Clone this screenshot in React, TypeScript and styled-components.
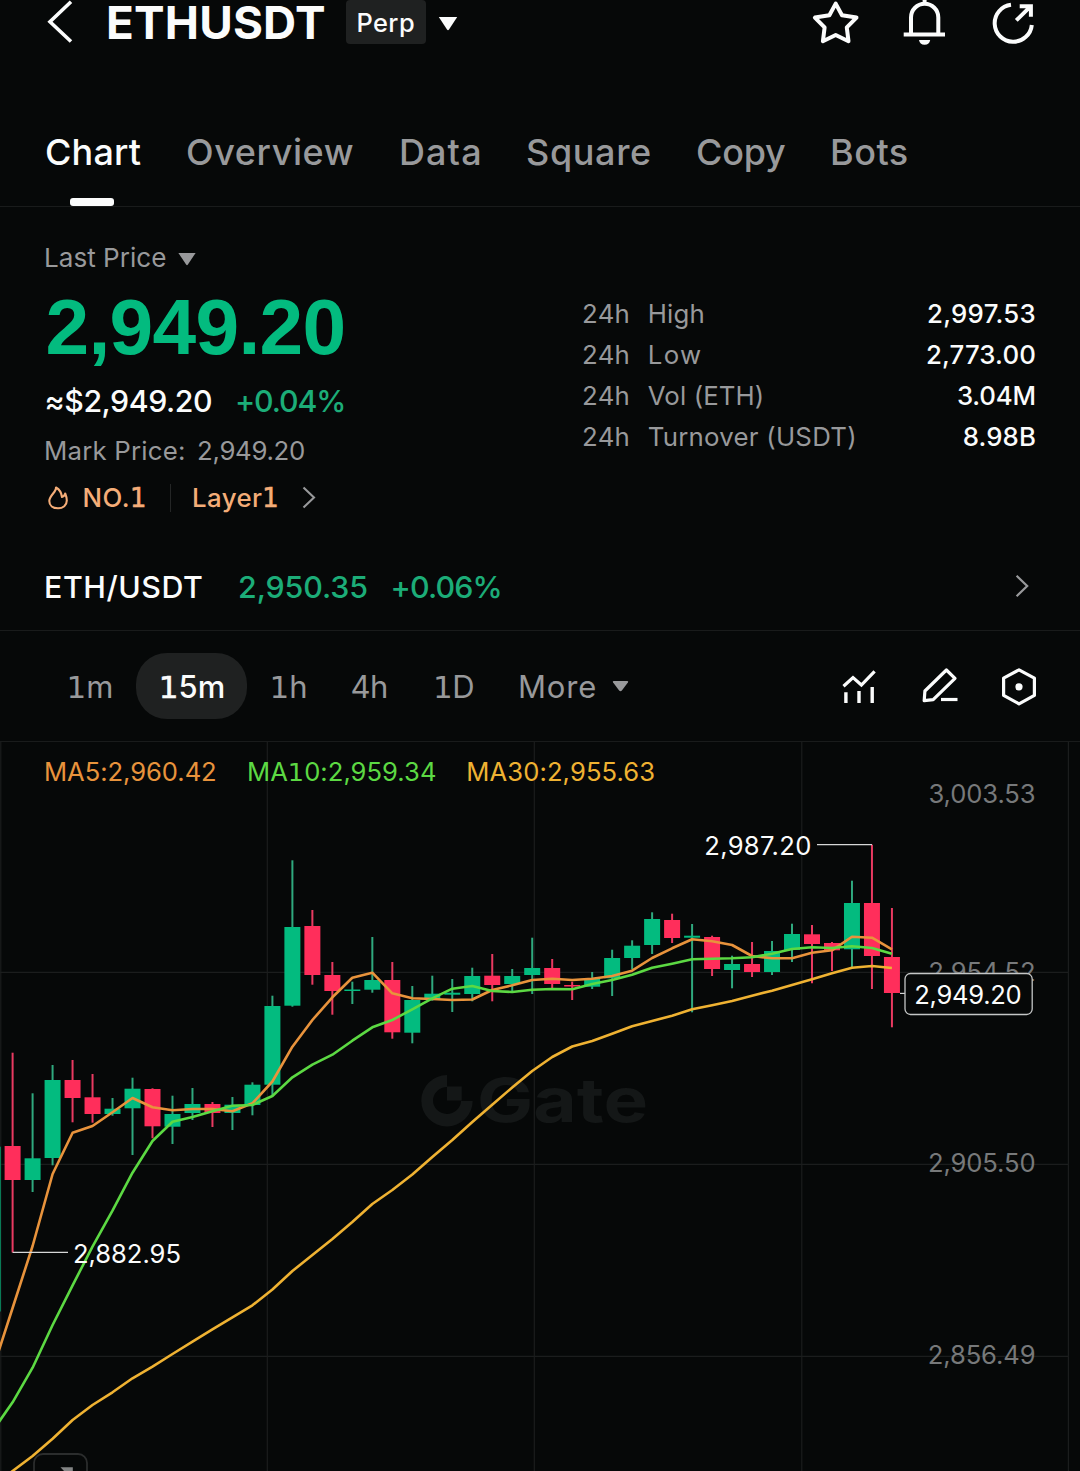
import React from 'react';
import styled, { createGlobalStyle, css } from 'styled-components';

const color = {
  bg: '#060808',
  line: '#191b1b',
  chip: '#1f2121',
  text: '#fbfcfc',
  muted: '#98999b',
  axis: '#77797a',
  green: '#03bb7f',
  greenSoft: '#1cad78',
  greenWick: '#2fa97e',
  red: '#ff2e5b',
  redWick: '#e93a61',
  orange: '#f4ad78',
  ma5: '#e8933c',
  ma10: '#5cd943',
  ma30: '#efb232',
};

const GlobalStyle = createGlobalStyle`
  * { box-sizing: border-box; }
  body { margin: 0; background: ${color.bg}; }
`;

const Screen = styled.main`
  width: 1080px;
  height: 1471px;
  overflow: hidden;
  display: flex;
  flex-direction: column;
  background: ${color.bg};
  color: ${color.text};
  font-family: Inter, 'Liberation Sans', sans-serif;
  white-space: nowrap;
`;

const tracked = css<{ $track?: number }>`
  letter-spacing: ${(p) => p.$track ?? 0}px;
`;

/* ---------- header ---------- */
const Header = styled.header`
  display: flex;
  align-items: center;
  height: 46px;
  padding: 0 44px 0 46px;
`;
const Pair = styled.h1`
  margin: 0 0 0 32px;
  width: 240px;
  font-size: 45.8px;
  line-height: 46px;
  font-weight: 650;
  letter-spacing: 0.2px;
`;
const Chip = styled.span`
  width: 80px;
  height: 44px;
  margin-bottom: 2px;
  padding-left: 10.5px;
  border-radius: 4px;
  background: ${color.chip};
  font-size: 25.4px;
  line-height: 46px;
  font-weight: 500;
  letter-spacing: 0.4px;
`;
const HeaderCaret = styled.svg`
  margin: 2px auto 0 12px;
`;
const Actions = styled.div`
  display: flex;
  gap: 42px;
`;

/* ---------- tabs ---------- */
const Tabs = styled.nav`
  display: grid;
  grid-template-columns: 141px 213px 127px 170px 134px auto;
  height: 161px;
  padding: 80px 0 0 45px;
  border-bottom: 1px solid ${color.line};
`;
const Tab = styled.span<{ $active?: boolean; $track?: number }>`
  height: 80px;
  font-size: 36px;
  line-height: 53px;
  font-weight: 500;
  color: ${(p) => (p.$active ? color.text : color.muted)};
  ${tracked}
`;
const Underline = styled.i`
  display: block;
  width: 44px;
  height: 8px;
  margin: 19px 0 0 25px;
  border-radius: 3px;
  background: ${color.text};
`;

/* ---------- price summary ---------- */
const Summary = styled.section`
  display: grid;
  grid-template-columns: 582px 454px;
  height: 337px;
`;
const PriceColumn = styled.div`
  padding: 30px 0 0 44px;
`;
const PriceKind = styled.div`
  display: flex;
  align-items: center;
  height: 40px;
  gap: 11.5px;
  font-size: 26.1px;
  color: ${color.muted};
`;
const PriceKindCaret = styled.svg`
  margin-top: 5px;
`;
const BigPrice = styled.div`
  height: 101px;
  padding-left: 1.5px;
  font-family: 'Liberation Sans', Arial, sans-serif;
  font-size: 78.5px;
  line-height: 101px;
  font-weight: 700;
  letter-spacing: -0.7px;
  color: ${color.green};
`;
const FiatRow = styled.div`
  display: grid;
  grid-template-columns: 191px auto;
  height: 47px;
  font-size: 30.3px;
  line-height: 47px;
  font-weight: 500;
`;
const Fiat = styled.span`
  padding-left: 0.5px;
  letter-spacing: -0.45px;
`;
const Change = styled.span<{ $track?: number }>`
  color: ${color.greenSoft};
  ${tracked}
`;
const MarkRow = styled.div`
  display: grid;
  grid-template-columns: 153px auto;
  height: 52px;
  font-size: 25.8px;
  line-height: 52px;
  color: ${color.muted};
`;
const MarkLabel = styled.span`
  letter-spacing: 0.2px;
`;
const MarkValue = styled.span`
  letter-spacing: -0.3px;
`;
const RankRow = styled.div`
  display: flex;
  align-items: center;
  height: 41px;
  font-size: 25.8px;
  font-weight: 500;
  color: ${color.orange};
`;
const Rank = styled.span`
  width: 99.5px;
  padding-left: 12.5px;
  letter-spacing: 0.5px;
`;
const RankDivider = styled.i`
  width: 1px;
  height: 28px;
  margin-right: 21.5px;
  background: #242626;
`;
const Sector = styled.span`
  width: 109px;
  letter-spacing: 0.4px;
`;

const Stats = styled.div`
  padding-top: 85.5px;
`;
const StatRow = styled.div`
  display: grid;
  grid-template-columns: 65.7px 1fr auto;
  height: 41px;
  font-size: 25.8px;
  line-height: 41px;
  color: ${color.muted};
`;
const StatPeriod = styled.span`
  letter-spacing: 0.3px;
`;
const StatLabel = styled.span<{ $track?: number }>`
  ${tracked}
`;
const StatValue = styled.span<{ $track?: number }>`
  font-weight: 500;
  color: ${color.text};
  ${tracked}
`;

/* ---------- spot pair link ---------- */
const SpotRow = styled.section`
  display: flex;
  align-items: center;
  height: 87px;
  padding: 0 50px 0 44px;
  border-bottom: 1px solid ${color.line};
  font-size: 30.4px;
  font-weight: 500;
`;
const SpotPair = styled.span`
  width: 194px;
  letter-spacing: 0.55px;
`;
const SpotPrice = styled.span`
  width: 152.5px;
  letter-spacing: -0.1px;
  color: ${color.greenSoft};
`;
const SpotChevron = styled.svg`
  margin: 0 0 2px auto;
`;

/* ---------- interval toolbar ---------- */
const Toolbar = styled.section`
  display: flex;
  align-items: center;
  height: 111px;
  padding: 0 42px 0 66.5px;
  border-bottom: 1px solid ${color.line};
  font-size: 31px;
  color: ${color.muted};
`;
const Interval = styled.span<{ $w: number; $track?: number }>`
  width: ${(p) => p.$w}px;
  ${tracked}
`;
const ActiveInterval = styled.span`
  width: 111px;
  height: 66px;
  margin-right: 22.5px;
  padding-left: 22.8px;
  border-radius: 31px;
  background: ${color.chip};
  color: ${color.text};
  line-height: 67px;
  font-weight: 500;
`;
const MoreCaret = styled.svg`
  margin: 1px auto 0 0;
`;
const Tools = styled.div`
  display: flex;
  gap: 40px;
`;

/* ---------- chart ---------- */
const ChartArea = styled.section`
  position: relative;
  height: 729px;
`;
const Legend = styled.div`
  position: absolute;
  top: 10px;
  left: 44px;
  display: grid;
  grid-template-columns: 203px 219.3px auto;
  font-size: 25.6px;
  line-height: 40px;
`;
const LegendItem = styled.span<{ $color: string; $track?: number }>`
  color: ${(p) => p.$color};
  ${tracked}
`;
const ChartSvg = styled.svg`
  display: block;
`;
const AxisText = styled.text`
  font-size: 25.6px;
  letter-spacing: -0.1px;
  fill: ${color.axis};
`;
const MarkText = styled.text`
  font-size: 25.6px;
  fill: ${color.text};
`;
const Watermark = styled.text`
  font-size: 61px;
  font-weight: 700;
  fill: #141717;
`;

/* The numeral one carries a foot serif, so it is set in a face that has it. */
const FootedOne = styled.span<{ $heavy?: boolean }>`
  font-family: 'DejaVu Sans', sans-serif;
  font-weight: 400;
  line-height: 0;
  -webkit-text-stroke: ${(p) => (p.$heavy ? '0.6px currentColor' : '0')};
`;
const Ones = ({ text, heavy }: { text: string; heavy?: boolean }) => (
  <>
    {text.split(/(1)/).map((part, i) =>
      part === '1' ? (
        <FootedOne key={i} $heavy={heavy}>1</FootedOne>
      ) : (
        part
      ),
    )}
  </>
);

const stats = [
  { label: 'High', lt: 0.2, value: '2,997.53', vt: 0.3 },
  { label: 'Low', lt: 1.4, value: '2,773.00', vt: 0.15 },
  { label: 'Vol (ETH)', lt: 0.12, value: '3.04M', vt: -0.15 },
  { label: 'Turnover (USDT)', lt: 0.25, value: '8.98B', vt: 0.1 },
];

const tabs = [
  { name: 'Chart', track: 0.2 },
  { name: 'Overview', track: 0.6 },
  { name: 'Data', track: 1.1 },
  { name: 'Square', track: 0.65 },
  { name: 'Copy', track: -0.2 },
  { name: 'Bots', track: 0.5 },
];

/* [rising, high, body top, body bottom, low] in canvas units */
type Candle = [number, number, number, number, number];
const candles: Candle[] = [
  [1, 1146.7, 1146.7, 1311.5, 1311.5],
  [0, 1052.7, 1146, 1180, 1252.5],
  [1, 1093.3, 1158.3, 1180, 1192],
  [1, 1065, 1080, 1158, 1165.3],
  [0, 1060, 1080, 1098, 1122.3],
  [0, 1074, 1097.3, 1114, 1122.7],
  [1, 1098, 1108.7, 1114, 1115.7],
  [1, 1077.7, 1088.7, 1108.3, 1155],
  [0, 1088.3, 1089, 1126.3, 1138.3],
  [1, 1095.7, 1114, 1126.7, 1144],
  [1, 1088, 1104, 1113, 1120],
  [0, 1102, 1104, 1113, 1127],
  [1, 1097, 1104.7, 1113, 1130],
  [1, 1082.3, 1084.7, 1105, 1115.3],
  [1, 995.7, 1006, 1084.7, 1095],
  [1, 860.3, 927, 1005.7, 1006.7],
  [0, 910, 926, 975, 984.7],
  [0, 962, 975, 991, 1014.7],
  [1, 981.7, 989.5, 991, 1004],
  [1, 937, 980, 989.7, 992.7],
  [0, 962, 980, 1032.3, 1038.7],
  [1, 986, 1000, 1032.7, 1043.3],
  [1, 975.7, 993.7, 1000, 1000.7],
  [1, 979, 992.7, 994.7, 1012],
  [1, 967.7, 976, 994, 1001.3],
  [0, 954, 975.7, 985, 1001.3],
  [1, 969, 976, 984, 993],
  [1, 937.7, 968, 975, 994],
  [0, 959, 968, 984, 988],
  [0, 981.7, 985, 986.5, 1000],
  [1, 972, 979, 986.7, 989],
  [1, 949.7, 958, 978.3, 996],
  [1, 940.3, 945.7, 958, 969.3],
  [1, 912.3, 919, 945, 954],
  [0, 913.7, 920, 938, 943],
  [1, 924, 935.7, 937.7, 1012.3],
  [0, 935.7, 937, 969, 976],
  [1, 955.7, 964, 970, 988.3],
  [0, 942, 964, 972, 977],
  [1, 941, 951, 972, 975],
  [1, 923.7, 934, 950, 962],
  [0, 925, 934.3, 944, 983.3],
  [0, 942, 943, 950.3, 971],
  [1, 880.7, 903, 949.3, 967],
  [0, 844.7, 903, 956, 989],
  [0, 908, 957, 993, 1027.3],
];

const ma5 = [1370, 1308, 1246, 1174, 1132.7, 1126, 1112.3, 1098, 1107.3, 1110.3, 1109, 1109, 1111.3, 1103.3, 1081.5, 1046.7, 1020, 997.3, 977.7, 972.7, 993.3, 998.3, 999, 1000, 999.5, 990, 985.3, 980, 978.7, 980, 978.7, 976, 970.7, 958, 948.3, 939.3, 941.3, 945, 956, 958.3, 958.3, 952.7, 950.3, 936.7, 937.7, 949.3];
const ma10 = [1431, 1402.3, 1367.7, 1325, 1285.3, 1246.7, 1210.7, 1172.7, 1141, 1121.7, 1117, 1111.3, 1105.7, 1105, 1096, 1077.3, 1064.7, 1054.7, 1040.7, 1027.3, 1020, 1009.3, 998.3, 988.7, 986, 991, 992, 989.7, 989, 989.3, 984, 980, 974.7, 967.7, 963.7, 959.3, 958.7, 958.3, 957.3, 953.7, 949, 947.3, 948, 946.3, 948, 953.7];
const ma30 = [1487, 1471, 1456, 1438.7, 1420, 1405, 1392.3, 1378.3, 1366.7, 1354, 1341.7, 1329.3, 1317.3, 1305.3, 1289.5, 1271, 1255, 1239, 1222, 1204, 1190, 1174.5, 1157, 1140, 1122, 1104.7, 1087.5, 1071, 1057, 1046.5, 1041, 1033.7, 1026.3, 1021, 1015.7, 1009.3, 1005.3, 1001, 995.7, 990.7, 985, 979.3, 973.3, 967.7, 966, 968];

const cx = (i: number) => 12.6 + 19.985 * (i - 1);
const toPoints = (ys: number[]) => ys.map((y, i) => `${cx(i).toFixed(1)},${y}`).join(' ');

const axisLabels: [string, number][] = [
  ['3,003.53', 803.2],
  ['2,954.52', 980.6],
  ['2,905.50', 1172.4],
  ['2,856.49', 1364.4],
];

const PriceChart = () => (
  <ChartSvg width="1080" height="729" viewBox="0 742 1080 729">
    <g stroke="#1b1d1d" strokeWidth="1.2">
      {[0.8, 267.3, 534.3, 801.8, 1068.4].map((x) => (
        <line key={x} x1={x} x2={x} y1="742" y2="1471" />
      ))}
      {[972.4, 1164.4, 1356.4].map((y) => (
        <line key={y} x1="0" x2="1068.4" y1={y} y2={y} />
      ))}
    </g>
    <g fill="#141717">
      <path d="M447 1075 A25.7 25.7 0 1 0 472.7 1101 H461 A14 13.5 0 1 1 447 1087 Z" />
      <rect x="447" y="1086.5" width="14.7" height="14" />
    </g>
    <Watermark x="477" y="1122" textLength="171" lengthAdjust="spacingAndGlyphs">Gate</Watermark>
    {axisLabels.map(([t, y]) => (
      <AxisText key={t} x="1035.5" y={y} textAnchor="end">{t}</AxisText>
    ))}
    {candles.map(([up, high, top, bottom, low], i) => (
      <g key={i}>
        <line x1={cx(i)} x2={cx(i)} y1={high} y2={low} stroke={up ? color.greenWick : color.redWick} strokeWidth="2" />
        <rect x={cx(i) - 8} y={top} width="16" height={bottom - top} fill={up ? color.green : color.red} />
      </g>
    ))}
    <g fill="none" strokeWidth="2.6" strokeLinejoin="round">
      <polyline points={toPoints(ma5)} stroke={color.ma5} />
      <polyline points={toPoints(ma10)} stroke={color.ma10} />
      <polyline points={toPoints(ma30)} stroke={color.ma30} />
    </g>
    <g stroke="#d6d7d7" strokeWidth="1.2">
      <line x1="817" x2="872" y1="844.6" y2="844.6" />
      <line x1="12.6" x2="68" y1="1252.4" y2="1252.4" />
      <line x1="900" x2="905" y1="993.4" y2="993.4" />
    </g>
    <MarkText x="704.3" y="855.2" letterSpacing="0.3">2,987.20</MarkText>
    <MarkText x="73" y="1263.2" letterSpacing="-0.05">2,882.95</MarkText>
    <rect x="905" y="973.5" width="127.2" height="41" rx="5.5" fill={color.bg} stroke="#c4c6c6" strokeWidth="1.3" />
    <MarkText x="914.3" y="1004.2" letterSpacing="-0.3">2,949.20</MarkText>
    <rect x="34" y="1454" width="53" height="50" rx="9" fill="none" stroke="#2b2d2d" strokeWidth="1.8" />
    <path d="M60.5 1467.3 H72.8 V1471 H64 Z" fill="#838585" />
  </ChartSvg>
);

export default function App() {
  return (
    <Screen>
      <GlobalStyle />
      <Header>
        <svg width="28" height="46" viewBox="46 0 28 46" fill="none" stroke={color.text} strokeWidth="3.6">
          <path d="M71 1.8 L50 21.7 L71 41.5" />
        </svg>
        <Pair>ETHUSDT</Pair>
        <Chip>Perp</Chip>
        <HeaderCaret width="20" height="14" viewBox="0 0 20 14" fill={color.text}>
          <path d="M0.8 0 H19.2 L11 12.6 Q10 13.8 9 12.6 Z" />
        </HeaderCaret>
        <Actions>
          <svg width="48" height="46" viewBox="812 0 48 46" fill="none" stroke={color.text} strokeWidth="4" strokeLinejoin="round">
            <path d="M835.7 3.6 L842 15.3 L856.5 17.6 L846.8 27.4 L848.5 41.2 L835.7 35 L822.9 41.2 L824.6 27.4 L814.9 17.6 L829.4 15.3 Z" />
          </svg>
          <svg width="46" height="46" viewBox="902 0 46 46" fill="none" stroke={color.text} strokeWidth="4">
            <path d="M911 34 V17.4 A13.6 13.6 0 0 1 938.3 17.4 V34 M903.7 34.6 H945 M924.6 0 V4" />
            <path d="M919 40 H930.2 Q929.5 44.7 924.6 44.7 Q919.7 44.7 919 40 Z" fill={color.text} stroke="none" />
          </svg>
          <svg width="46" height="46" viewBox="990 0 46 46" fill="none" stroke={color.text} strokeWidth="4">
            <path d="M1011 4.7 A18.6 18.6 0 1 0 1031.8 25" />
            <path d="M1016.3 20.4 L1030.3 6.6 M1019.7 6.2 H1030.9 V16.8" />
          </svg>
        </Actions>
      </Header>

      <Tabs>
        {tabs.map((t, i) => (
          <Tab key={t.name} $active={i === 0} $track={t.track}>
            {t.name}
            {i === 0 && <Underline />}
          </Tab>
        ))}
      </Tabs>

      <Summary>
        <PriceColumn>
          <PriceKind>
            Last Price
            <PriceKindCaret width="18" height="13" viewBox="0 0 18 13" fill={color.muted}>
              <path d="M0.4 0 H17.6 L9.9 11.6 Q9 12.8 8.1 11.6 Z" />
            </PriceKindCaret>
          </PriceKind>
          <BigPrice>2,949.20</BigPrice>
          <FiatRow>
            <Fiat>≈$2,949.20</Fiat>
            <Change $track={-1.1}>+0.04%</Change>
          </FiatRow>
          <MarkRow>
            <MarkLabel>Mark Price:</MarkLabel>
            <MarkValue>2,949.20</MarkValue>
          </MarkRow>
          <RankRow>
            <svg width="26" height="28" viewBox="44 483 26 28" fill="none" stroke={color.orange} strokeWidth="2.1" strokeLinejoin="round">
              <path d="M56 486.5 C56.5 491 49.3 494.5 49.3 500 C49.3 504.5 53 507.3 58 507.3 C63 507.3 66.8 504.3 66.8 499.5 C66.8 496.5 66 494.5 65.2 492.5 C64.5 494.5 63.5 495.8 62 496 C61.5 492 59.5 488.5 56 486.5 Z" />
            </svg>
            <Rank><Ones text="NO.1" heavy /></Rank>
            <RankDivider />
            <Sector><Ones text="Layer1" heavy /></Sector>
            <svg width="16" height="24" viewBox="0 0 16 24" fill="none" stroke={color.muted} strokeWidth="2.1">
              <path d="M2.5 1.5 L13 11.5 L2.5 21.5" />
            </svg>
          </RankRow>
        </PriceColumn>
        <Stats>
          {stats.map((s) => (
            <StatRow key={s.label}>
              <StatPeriod>24h</StatPeriod>
              <StatLabel $track={s.lt}>{s.label}</StatLabel>
              <StatValue $track={s.vt}>{s.value}</StatValue>
            </StatRow>
          ))}
        </Stats>
      </Summary>

      <SpotRow>
        <SpotPair>ETH/USDT</SpotPair>
        <SpotPrice>2,950.35</SpotPrice>
        <Change $track={-0.85}>+0.06%</Change>
        <SpotChevron width="16" height="24" viewBox="0 0 16 24" fill="none" stroke={color.muted} strokeWidth="2.2">
          <path d="M2.6 1.7 L13.2 12 L2.6 22.3" />
        </SpotChevron>
      </SpotRow>

      <Toolbar>
        <Interval $w={69.5} $track={0}><Ones text="1m" /></Interval>
        <ActiveInterval><Ones text="15m" heavy /></ActiveInterval>
        <Interval $w={81}><Ones text="1h" /></Interval>
        <Interval $w={82.5} $track={-0.5}>4h</Interval>
        <Interval $w={85} $track={-0.5}><Ones text="1D" /></Interval>
        <Interval $w={94} $track={0.8}>More</Interval>
        <MoreCaret width="17" height="11" viewBox="0 0 17 11" fill={color.muted}>
          <path d="M1.6 0 H15.4 Q16.8 0.2 15.9 1.6 L9.9 9.4 Q8.5 11 7.1 9.4 L1.1 1.6 Q0.2 0.2 1.6 0 Z" />
        </MoreCaret>
        <Tools>
          <svg width="38" height="40" viewBox="842 666 38 40" fill="none" stroke={color.text} strokeWidth="3.2">
            <path d="M843.5 686.3 L853 677.6 L861.4 685 L874.6 671.3" />
            <path d="M845.9 692.3 V703 M859 691 V703 M872.2 687 V703" strokeWidth="3.4" />
          </svg>
          <svg width="40" height="40" viewBox="920 666 40 40" fill="none" stroke={color.text} strokeWidth="3.2">
            <path d="M946.4 670 L955 678.4 L933.2 699.6 L924.2 700.7 L924.9 691 Z" strokeLinejoin="round" />
            <path d="M941 699.5 H957.5" />
          </svg>
          <svg width="38" height="40" viewBox="1000 666 38 40" fill="none" stroke={color.text} strokeWidth="3.2" strokeLinejoin="round">
            <path d="M1019 669.9 L1034.4 678.2 V695.4 L1019 703.8 L1003.6 695.4 V678.2 Z" />
            <circle cx="1019" cy="686.8" r="3.6" fill={color.text} stroke="none" />
          </svg>
        </Tools>
      </Toolbar>

      <ChartArea>
        <PriceChart />
        <Legend>
          <LegendItem $color={color.ma5} $track={-0.05}>MA5:2,960.42</LegendItem>
          <LegendItem $color={color.ma10} $track={0.03}><Ones text="MA10:2,959.34" /></LegendItem>
          <LegendItem $color={color.ma30} $track={0.1}>MA30:2,955.63</LegendItem>
        </Legend>
      </ChartArea>
    </Screen>
  );
}
